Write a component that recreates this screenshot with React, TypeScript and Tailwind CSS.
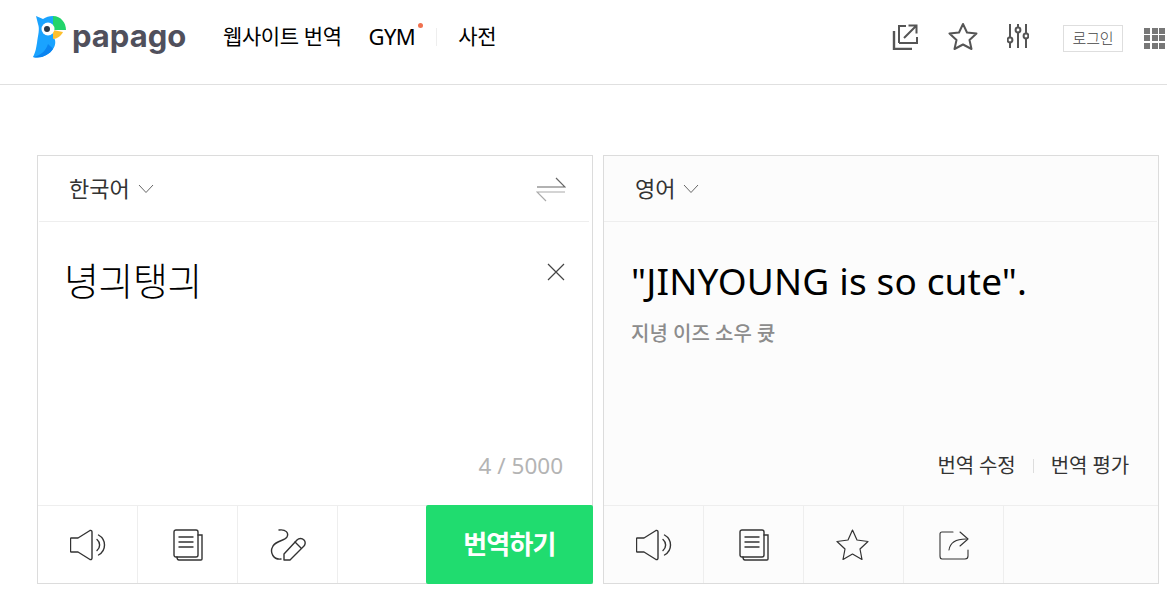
const font = { fontFamily: '"Noto Sans", "Noto Sans CJK KR", sans-serif' };

function Logo() {
  return (
    <svg width="36" height="44" viewBox="0 0 36 44">
      <path d="M4 1 L11 4 C14 2 17 1 21 1 L21 22 C24 24 24 30 21 34 C17 40 9 44 1 42 C4 36 4 33 5 28 C6 20 8 14 6 9 Z" fill="#1aa3ff" />
      <path d="M1 42 C8 41 14 36 16 29 C19 32 21 33 21 34 C17 40 9 44 1 42 Z" fill="#0a84f0" />
      <path d="M21 1 C29 1 34 8 34 15 L21 15 Z" fill="#22d46b" />
      <path d="M21 15 L31 17 C29 21 25 24 21 24 Z" fill="#fdc02f" />
      <circle cx="16" cy="14" r="6.5" fill="#fff" />
      <circle cx="15" cy="14" r="3" fill="#2b3a4a" />
    </svg>
  );
}

function Chevron() {
  return (
    <svg width="16" height="10" viewBox="0 0 16 10" fill="none" stroke="#666" strokeWidth="1">
      <path d="M1 1 L8 8.5 L15 1" />
    </svg>
  );
}

function HeaderIcons() {
  return (
    <div className="flex items-center text-[#555]">
      <svg width="26" height="26" viewBox="0 0 26 26" fill="none" stroke="currentColor" strokeWidth="2" className="mr-[30px] mt-[-1px]">
        <path d="M7 19 V2 H14 M25 13 V19 H7" />
        <path d="M12 14 L24 2 M16.5 1.5 H24.5 V9.5" />
        <path d="M2 7 V25 H20" strokeWidth="2.4" />
      </svg>
      <svg width="30" height="28" viewBox="0 0 30 28" fill="none" stroke="currentColor" strokeWidth="2" strokeLinejoin="round" className="mr-[29px] mt-[-2px]">
        <path d="M15 2 L19 10.5 L28.5 11.5 L21.5 18 L23.5 27 L15 22.5 L6.5 27 L8.5 18 L1.5 11.5 L11 10.5 Z" />
      </svg>
      <svg width="22" height="26" viewBox="0 0 22 26" fill="none" stroke="currentColor" strokeWidth="2" className="mr-[34px] mt-[-2px]">
        <path d="M3 1 V25 M11 1 V25 M19 1 V25" />
        <circle cx="3" cy="17" r="2.4" fill="#fff" />
        <circle cx="11" cy="7" r="2.4" fill="#fff" />
        <circle cx="19" cy="13" r="2.4" fill="#fff" />
      </svg>
      <div className="w-[60px] h-[27px] mt-[2px] border border-[#dedede] flex items-center justify-center text-[15px] font-light text-[#444] tracking-[-0.2px] mr-[21px]">
        로그인
      </div>
      <div className="grid grid-cols-3 gap-[1.5px] mt-[2px]">
        {[0, 1, 2, 3, 4, 5, 6, 7, 8].map(i => (
          <div key={i} className="w-[6px] h-[6px] bg-[#777]" />
        ))}
      </div>
    </div>
  );
}

function SpeakerIcon() {
  return (
    <svg width="36" height="32" viewBox="0 0 36 32" fill="none" stroke="#333" strokeWidth="1.4" strokeLinejoin="round" strokeLinecap="round">
      <path d="M1 9 H8 L20 1.5 C21.5 1 22 2 22 3 V29 C22 30 21.5 31 20 30.5 L8 23 H1 C0.7 23 0.5 22.5 0.5 22 V10 C0.5 9.5 0.7 9 1 9 Z" />
      <path d="M27 10.5 C30.5 13.5 30.5 18.5 27 21.5" />
      <path d="M28.5 6 C36.5 10.5 36.5 21.5 28.5 26" />
    </svg>
  );
}

function CopyIcon() {
  return (
    <svg width="30" height="32" viewBox="0 0 30 32" fill="none" stroke="#333" strokeWidth="1.4" strokeLinecap="round">
      <rect x="1" y="1" width="24" height="27" rx="2" />
      <path d="M25 6 H29 V30 C29 31 28.5 31 28 31 H6 C4.5 31 4 30 4 28" />
      <path d="M6 8 H20 M6 13 H20 M6 18 H20" />
    </svg>
  );
}

function HandwriteIcon() {
  return (
    <svg width="36" height="32" viewBox="0 0 36 32" fill="none" stroke="#333" strokeWidth="1.4" strokeLinejoin="round" strokeLinecap="round">
      <path d="M9 1 C16 0 19 4 17 8 C15 12 7 11 3 17 C-1 24 4 31 11 30" />
      <path d="M14 31 V25 L27 11 C29 9 32 9 34 11 C36 13 35 16 34 17 L20 31 Z" />
      <path d="M25 13 L31 19" />
    </svg>
  );
}

function StarIcon() {
  return (
    <svg width="33" height="31" viewBox="0 0 33 31" fill="none" stroke="#333" strokeWidth="1.2" strokeLinejoin="round" className="ml-[-2px]">
      <path d="M16.5 1 L21 11 L32 12.5 L24 20 L26 30.5 L16.5 25 L7 30.5 L9 20 L1 12.5 L12 11 Z" />
    </svg>
  );
}

function ShareIcon() {
  return (
    <svg width="30" height="30" viewBox="0 0 30 30" fill="none" stroke="#333" strokeWidth="1.1" strokeLinejoin="round" strokeLinecap="round" className="ml-[1px]">
      <path d="M14 2 H3 C2 2 1 3 1 4 V26 C1 28 2 29 3 29 H26 C28 29 29 28 29 26 V20" />
      <path d="M10 20 C11 13 16 9 27 9 M21 2 L29 9 L21 16" />
    </svg>
  );
}

function ToolCell({ children }: { children: React.ReactNode }) {
  return (
    <div className="w-[100px] h-full flex items-center justify-center border-r border-[#eee]">
      {children}
    </div>
  );
}

export default function App() {
  return (
    <div className="w-[1167px] h-[601px] overflow-hidden bg-white" style={font}>
      <header className="h-[85px] border-b border-[#e0e0e0] flex items-center pl-[32px] pr-[2px] pb-[10px]">
        <div className="flex items-center w-[191px]">
          <Logo />
          <span className="ml-[4px] text-[31px] font-bold text-[#50505c] leading-none mt-[-3px]" style={{ fontFamily: 'Inter, sans-serif' }}>
            papago
          </span>
        </div>
        <nav className="flex items-center text-[21px] text-black tracking-[-0.4px] flex-1 mt-[-1px]">
          <span>웹사이트 번역</span>
          <span className="relative ml-[27px] text-[22px] tracking-[-0.6px]">
            GYM
            <span className="absolute top-[3px] right-[-8px] w-[5px] h-[5px] rounded-full bg-[#f0714f]" />
          </span>
          <span className="w-px h-[18px] bg-[#eee] ml-[21px] mr-[21px]" />
          <span>사전</span>
        </nav>
        <HeaderIcons />
      </header>

      <main className="flex gap-[10px] pl-[37px] pt-[70px]">
        {/* Source */}
        <section className="relative w-[556px] h-[429px] border border-[#dcdcdc] flex flex-col">
          <div className="h-[66px] mr-[3px] ml-px border-b border-[#eee] flex items-center justify-between pl-[30px] pr-[23px] shrink-0">
            <div className="flex items-center gap-[8px] text-[22px] text-[#333]">
              한국어
              <Chevron />
            </div>
            <svg width="30" height="26" viewBox="0 0 30 26" fill="none" strokeWidth="1.2">
              <path d="M1 11 H29 L20 2" stroke="#666" />
              <path d="M29 16 H1 L10 25" stroke="#aaa" />
            </svg>
          </div>
          <div className="flex-1 relative pl-[26px] pt-[28px]">
            <div className="text-[38px] leading-[60px] font-light text-black tracking-[-0.5px]">녕긔탱긔</div>
            <svg width="18" height="18" viewBox="0 0 18 18" stroke="#444" strokeWidth="1.2" className="absolute top-[41px] right-[27px]">
              <path d="M1 1 L17 17 M17 1 L1 17" />
            </svg>
            <div className="absolute bottom-[24px] right-[29px] text-[22.5px] leading-[30px] text-[#b4b4b4]">4 / 5000</div>
          </div>
          <div className="h-[78px] border-t border-[#eee] flex shrink-0">
            <ToolCell><SpeakerIcon /></ToolCell>
            <ToolCell><CopyIcon /></ToolCell>
            <ToolCell><HandwriteIcon /></ToolCell>
            <ToolCell><span /></ToolCell>
          </div>
          <button className="absolute right-[-1px] bottom-[-1px] w-[167px] h-[79px] rounded-[2px] bg-[#20dc6f] text-white text-[26px] font-bold tracking-[-0.8px]">
            번역하기
          </button>
        </section>

        {/* Target */}
        <section className="w-[556px] h-[429px] border border-[#dcdcdc] flex flex-col bg-[#fcfcfc]">
          <div className="h-[66px] mr-[1px] border-b border-[#eee] flex items-center pl-[31px] shrink-0">
            <div className="flex items-center gap-[8px] text-[22px] text-[#333]">
              영어
              <Chevron />
            </div>
          </div>
          <div className="flex-1 relative pl-[27px] pt-[29px]">
            <div className="text-[37px] leading-[60px] text-black tracking-[0.15px]">"JINYOUNG is so cute".</div>
            <div className="mt-[9px] text-[20px] leading-[28px] font-medium text-[#8c8c8c]">지녕 이즈 소우 큣</div>
            <div className="absolute bottom-[24px] right-[29px] flex items-center text-[20px] leading-[30px] text-[#333] tracking-[-0.1px]">
              <span>번역 수정</span>
              <span className="w-px h-[14px] bg-[#ddd] mx-[17px]" />
              <span>번역 평가</span>
            </div>
          </div>
          <div className="h-[78px] border-t border-[#eee] flex shrink-0">
            <ToolCell><SpeakerIcon /></ToolCell>
            <ToolCell><CopyIcon /></ToolCell>
            <ToolCell><StarIcon /></ToolCell>
            <ToolCell><ShareIcon /></ToolCell>
          </div>
        </section>
      </main>
    </div>
  );
}
